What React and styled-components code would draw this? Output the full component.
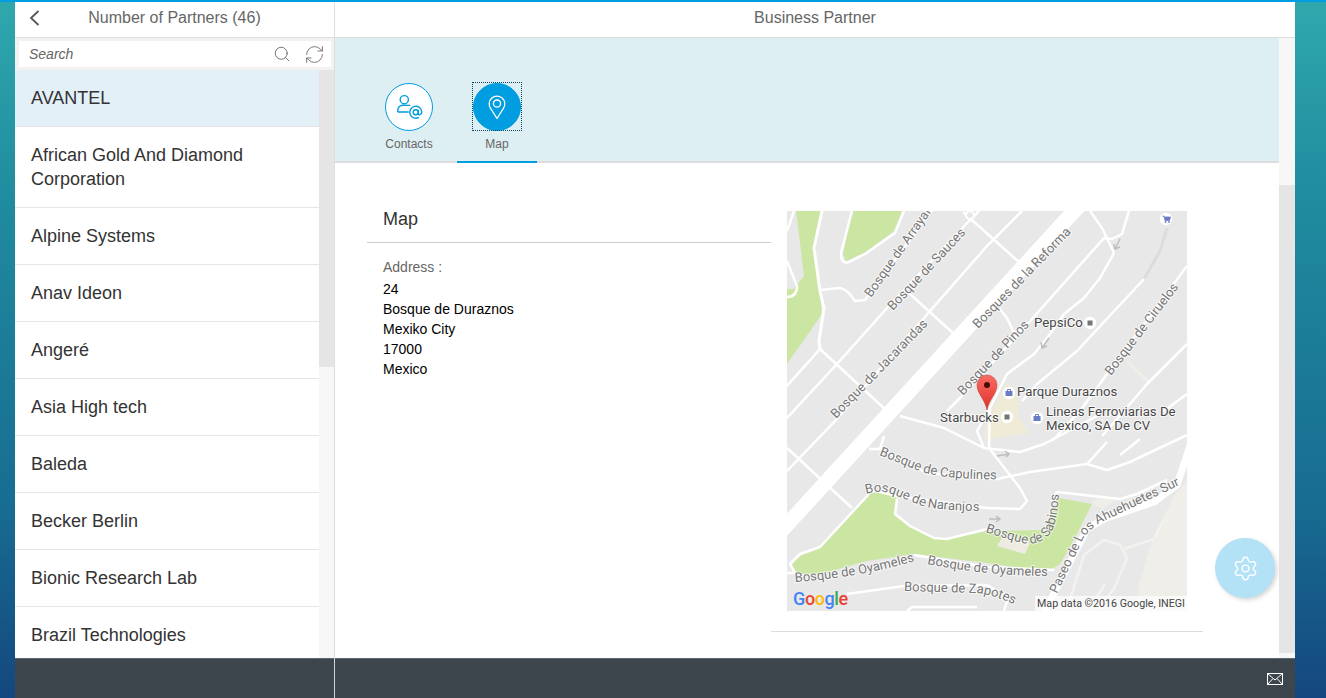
import React from "react";
import styled, { createGlobalStyle } from "styled-components";
import { Search, RefreshCw, Settings } from "lucide-react";

const GlobalStyle = createGlobalStyle`
    html, body, #root {
        margin: 0;
        height: 100%;
        overflow: hidden;
    }
    body {
        font-family: "Liberation Sans", Arial, sans-serif;
        background: linear-gradient(180deg, #2fa8ad 0%, #1f8a9e 30%, #186d92 72%, #14477f 100%);
    }
    * {
        box-sizing: border-box;
    }
`;

const Page = styled.div`
    height: 698px;
    display: flex;
    flex-direction: column;
    border-top: 2px solid #009de0;
    padding: 0 31px 0 15px;
`;

const Shell = styled.div`
    position: relative;
    flex: 1;
    min-height: 0;
    display: flex;
    flex-direction: column;
    background: #fff;
`;

const Columns = styled.div`
    flex: 1;
    min-height: 0;
    display: grid;
    grid-template-columns: 320px 1fr;
`;

const Master = styled.section`
    display: flex;
    flex-direction: column;
    min-height: 0;
    border-right: 1px solid #ddd;
`;

const Detail = styled.section`
    display: flex;
    flex-direction: column;
    min-height: 0;
`;

const Header = styled.header`
    position: relative;
    flex: none;
    height: 36px;
    padding-bottom: 3px;
    display: flex;
    align-items: center;
    justify-content: center;
    font-size: 16px;
    color: #666;
    border-bottom: 1px solid #ddd;
`;

const BackButton = styled.button`
    position: absolute;
    left: 14px;
    top: 7px;
    width: 12px;
    height: 18px;
    padding: 0;
    border: 0;
    background: none;
    color: #555;
    display: flex;
`;

const SearchRow = styled.div`
    flex: none;
    height: 32px;
    padding: 3px 3px 3px 4px;
    background: #f2f2f2;
`;

const SearchBox = styled.div`
    height: 26px;
    display: flex;
    align-items: center;
    gap: 13px;
    padding: 0 6px 0 10px;
    background: #fff;
    color: #666;

    input {
        flex: 1;
        min-width: 0;
        border: 0;
        outline: 0;
        padding: 0;
        font: italic 14px "Liberation Sans", Arial, sans-serif;
        color: #666;
    }

    input::placeholder {
        color: #666;
        opacity: 1;
    }
`;

const ListArea = styled.div`
    flex: 1;
    min-height: 0;
    display: flex;
    overflow: hidden;
`;

const PartnerList = styled.ul`
    flex: 1;
    min-width: 0;
    margin: 0;
    padding: 0;
    list-style: none;
`;

const PartnerItem = styled.li`
    padding: 16px;
    font-size: 18px;
    line-height: 24px;
    color: #333;
    background: ${p => (p.$selected ? "#e3f0f8" : "#fff")};
    border-bottom: 1px solid #e5e5e5;
`;

const ScrollTrack = styled.div`
    flex: none;
    width: ${p => p.$width}px;
    background: #f7f7f7;
    padding-top: ${p => p.$offset}px;
`;

const ScrollThumb = styled.div`
    height: ${p => p.$height}px;
    background: #e5e5e5;
`;

const DetailBody = styled.div`
    flex: 1;
    min-height: 0;
    display: flex;
`;

const DetailMain = styled.div`
    flex: 1;
    min-width: 0;
    display: flex;
    flex-direction: column;
`;

const TabBar = styled.nav`
    flex: none;
    height: 125px;
    padding: 45px 0 0 34px;
    display: flex;
    gap: 8px;
    background: #deeff3;
    border-bottom: 2px solid #ddd;
`;

const Tab = styled.div`
    position: relative;
    width: 80px;
    height: 80px;
    display: flex;
    flex-direction: column;
    align-items: center;
    font-size: 12px;
    color: #666;
    border-bottom: ${p => (p.$active ? "2px solid #009de0" : "0")};
`;

const TabCircle = styled.div`
    position: relative;
    width: 48px;
    height: 48px;
    border-radius: 50%;
    border: 1px solid #009de0;
    background: ${p => (p.$active ? "#009de0" : "#fff")};
    margin-bottom: 6px;
    line-height: 0;

    ${p => p.$active && `
        &::after {
            content: "";
            position: absolute;
            inset: -2px -2px -1px -2px;
            border: 1px dotted #00476b;
        }
    `}

    svg {
        position: absolute;
        left: -1px;
        top: -1px;
    }
`;

const TabLabel = styled.span`
    line-height: 14px;
`;

const Content = styled.div`
    flex: 1;
    min-height: 0;
    padding-left: 32px;
    display: grid;
    grid-template-columns: 404px 432px;
    align-content: start;
`;

const InfoColumn = styled.div`
    padding-top: 40px;
`;

const SectionTitle = styled.h2`
    margin: 0;
    height: 40px;
    padding-left: 16px;
    font-size: 18px;
    font-weight: 400;
    line-height: 32px;
    color: #333;
    border-bottom: 1px solid #ccc;
`;

const Address = styled.div`
    margin-top: 14px;
    padding-left: 16px;
    font-size: 14px;
    line-height: 20px;
    color: #000;
`;

const AddressLabel = styled.div`
    color: #666;
    margin-bottom: 2px;
`;

const MapColumn = styled.div`
    padding: 48px 16px 20px;
    border-bottom: 1px solid #ddd;
    line-height: 0;
`;

const SettingsFab = styled.button`
    position: absolute;
    right: 20px;
    top: 536px;
    width: 60px;
    height: 60px;
    padding: 0;
    border: 0;
    border-radius: 50%;
    display: flex;
    align-items: center;
    justify-content: center;
    background: #b3e1f6;
    color: #fff;
    box-shadow: 2px 2px 4px rgba(0, 0, 0, 0.16);
`;

const Footer = styled.footer`
    flex: none;
    height: 40px;
    display: flex;
    align-items: center;
    justify-content: flex-end;
    padding-right: 12px;
    background: #3d464c;
    border-top: 1px solid #5b6770;
    color: #fff;
`;

const FooterSplit = styled.div`
    position: absolute;
    left: 319px;
    bottom: 0;
    height: 40px;
    width: 1px;
    background: #d5d5d5;
`;

const MapLabel = styled.text`
    font-family: Roboto, sans-serif;
    font-size: ${p => p.$size || 13}px;
    fill: ${p => p.$dark ? "#484848" : "#767676"};
    stroke: rgba(255, 255, 255, 0.7);
    stroke-width: 2px;
    paint-order: stroke;
    stroke-linejoin: round;
`;

const partners = [
    "AVANTEL",
    "African Gold And Diamond Corporation",
    "Alpine Systems",
    "Anav Ideon",
    "Angeré",
    "Asia High tech",
    "Baleda",
    "Becker Berlin",
    "Bionic Research Lab",
    "Brazil Technologies",
];

const roads = [
    ["M35,0 L27,37 L33,80 L37,97 L32,130 L33,138", 3],
    ["M33,79 L53,77 Q60,78 68,90 L78,89 L148,-5", 2.5],
    ["M7,0 L0,20", 2.5],
    ["M0,50 L10,75 Q10,86 0,86", 2.5],
    ["M65,0 L54,42 Q54,54 62,51 L78,43 L108,22 L117,0", 2.5],
    ["M33,138 L0,175", 2.5],
    ["M200,-8 L182,10 L100,97 L50,153 L0,207", 2.5],
    ["M235,0 L200,35 L143,100 L48,210 L0,260", 2.5],
    ["M33,138 L100,200", 2.5],
    ["M122,82 L167,123", 2.5],
    ["M176,1 L233,52", 2.5],
    ["M300,-14 L-14,329", 15],
    ["M303,0 L315,17 L327,42", 2.5],
    ["M342,0 L335,23 L325,28 L317,27 L237,117 L173,187 L160,200", 2.5],
    ["M212,97 L220,107 L227,122 L237,117", 2.5],
    ["M327,42 L313,67 L297,87 L277,103 L263,123 L247,143 L220,163 L203,197 L202,237 L233,277 L240,290 L233,298 L200,297 L110,285 L80,278", 2.5],
    ["M113,205 L157,217 L197,237 L190,220 L203,197", 2.5],
    ["M197,237 L233,241 L257,233 L310,205", 2.5],
    ["M93,238 L140,262 L210,268 L243,261 L300,253 L320,259 L343,251 L400,224", 2.5],
    ["M82,238 L93,238 L97,225", 2.5],
    ["M300,253 L320,231", 2.5],
    ["M333,244 L353,228", 2.5],
    ["M357,68 L290,140 L250,173 L235,190", 2.5],
    ["M400,55 L320,163 L293,200 L265,230", 2.5],
    ["M400,133 L360,173 L337,200 L315,225", 2.5],
    ["M377,200 L400,183", 2.5],
    ["M265,288 L270,281 L333,288 L350,283 L380,269", 2.5],
    ["M0,237 L65,297", 2.5],
    ["M82,283 L33,336 L13,343 L3,353 L8,362 L0,362", 2.5],
    ["M110,288 L108,303 L123,315 L147,327 L160,328 L200,318", 2.5],
    ["M127,344 L200,356 L267,359", 2.5],
    ["M60,383 L117,375 L200,374 L215,383 L220,390 L217,400", 2.5],
    ["M120,400 L125,396 L190,396", 2.5],
    ["M406,225 L400,244 L390,274 L367,291 L317,308 L300,318 L283,351 L258,400", 7],
];

const labels = [
    ["Bosque de Arrayanes", "M84,87 L162,-24"],
    ["Bosque de Sauces", "M106,100 L200,0"],
    ["Bosque de Jacarandas", "M49,208 L170,84"],
    ["Bosques de la Reforma", "M191,118 L312,-7"],
    ["Bosque de Pinos", "M176,185 L259,97"],
    ["Bosque de Ciruelos", "M324,165 L415,46"],
    ["Bosque de Capulines", "M92,244 L135,261 Q165,270 230,268"],
    ["Bosque de Naranjos", "M79,283 Q95,278 110,285 L135,295 Q160,301 215,300"],
    ["Bosque de Oyameles", "M8,371 Q70,367 128,350 L150,343"],
    ["Bosque de Oyameles", "M140,353 Q200,365 263,365 L285,365"],
    ["Bosque de Sabinos", "M198,321 Q225,330 240,333 Q258,333 266,318 Q273,300 272,262"],
    ["Paseo de Los Ahuehuetes Sur", "M270,383 L296,328 Q304,316 317,310 L420,261"],
    ["Bosque de Zapotes", "M117,380 L190,382 Q215,385 245,403"],
];

const ContactsIcon = () => (
    <svg width="48" height="48" viewBox="0 0 48 48" fill="none" stroke="#009de0" strokeWidth="1.4">
        <circle cx="19.3" cy="16.7" r="4.1" />
        <path d="M12.7 29 Q12.6 22.8 17.2 22.2 L25.3 22.4 M12.7 29 H23.7" />
        <circle cx="30.7" cy="29.3" r="2.5" />
        <path d="M33.2 26.8 V30.4 Q33.4 32.4 35 31.7 Q36.8 30.8 36.8 29 A6 6 0 1 0 33.9 34.4" />
    </svg>
);

const PinIcon = () => (
    <svg width="48" height="48" viewBox="0 0 48 48" fill="none" stroke="#fff" strokeWidth="1.3">
        <path d="M24 35.5 L17.6 25.3 A7.8 7.8 0 1 1 30.4 25.3 Z" strokeLinejoin="round" />
        <circle cx="24" cy="20.6" r="3.6" />
    </svg>
);

const MailIcon = () => (
    <svg width="16" height="12" viewBox="0 0 16 12" fill="none" stroke="currentColor" strokeWidth="1">
        <rect x="0.5" y="0.5" width="15" height="11" />
        <path d="M0.5 0.5 L8 7 L15.5 0.5 M0.5 11.5 L6 5.5 M15.5 11.5 L10 5.5" />
    </svg>
);

const Poi = ({ x, y, color = "#757575", children }) => (
    <g>
        <circle cx={x} cy={y} r="6.2" fill="#fff" />
        {children || <rect x={x - 2.5} y={y - 2.5} width="5" height="5" fill={color} />}
    </g>
);

const MapPicture = () => (
    <svg width="400" height="400" viewBox="0 0 400 400">
        <defs>
            <linearGradient id="pinFill" x1="0" y1="0" x2="0" y2="1">
                <stop offset="0" stopColor="#f76d64" />
                <stop offset="1" stopColor="#e0302a" />
            </linearGradient>
            <clipPath id="mapClip"><rect width="400" height="400" /></clipPath>
            {labels.map(([, d], i) => <path key={i} id={`label-${i}`} d={d} />)}
        </defs>
        <g clipPath="url(#mapClip)">
            <rect width="400" height="400" fill="#e8e8e8" />
            <path d="M9,0 L17,65 L9,75 L0,85 V153 L35,103 L33,80 L28,33 L35,0 Z" fill="#cbe6a3" />
            <path d="M0,78 H7 L4,84 H0 Z" fill="#cbe6a3" />
            <path d="M65,0 L56,43 L59,50 L77,42 L107,20 L115,0 Z" fill="#cbe6a3" />
            <path d="M5,353 L13,345 L30,338 L82,283 L97,280 L110,288 L108,303 L123,315 L147,327 L160,328 L200,320 L257,319 L272,287 L305,293 L288,327 L273,353 L262,360 L233,357 L200,352 L127,343 L80,350 L33,363 L10,363 Z" fill="#cbe6a3" />
            <path d="M210,335 L217,323 L243,332 L238,343 Z" fill="#efebe2" />
            <path d="M347,400 L353,370 L365,330 L387,285 L400,270 V400 Z" fill="#efeee9" />
            <path d="M305,293 L312,284 L330,288 L316,298 Z" fill="#efeee9" />
            <path d="M205,200 L220,172 L232,188 L230,205 L242,222 L197,229 L200,212 Z" fill="#f0ebd7" />
            <path d="M340,150 L363,172" stroke="#efefe8" strokeWidth="2.5" />
            <path d="M380,17 L373,40 L357,68" stroke="#dcdcdc" strokeWidth="3" fill="none" />
            {roads.map(([d, w], i) => (
                <path key={i} d={d} fill="none" stroke="#fff" strokeWidth={w} strokeLinejoin="round" />
            ))}
            <g fill="none" stroke="#f3f2ee" strokeWidth="2.5">
                <path d="M280,398 L297,344 L317,329 L333,334 L340,347 L327,378 L310,398" />
                <path d="M337,338 L367,328 L377,308" />
                <path d="M318,373 L303,396" />
            </g>
            <circle cx="183" cy="4" r="4" fill="#e8e8e8" stroke="#fff" strokeWidth="2" />
            <g fill="none" stroke="#bdbdbd" strokeWidth="1.5">
                <path d="M333,28 L328,38 M327,33 L328,38 L333,36" />
                <path d="M262,127 L255,137 M254,131 L255,137 L260,135" />
                <path d="M210,245 L222,243 M218,240 L222,243 L219,246" />
                <path d="M202,308 L213,308 M209,305 L213,308 L209,311" />
            </g>
            {labels.map(([t], i) => (
                <MapLabel key={i}><textPath href={`#label-${i}`}>{t}</textPath></MapLabel>
            ))}
            <MapLabel $dark $size={13.2} x="247" y="116">PepsiCo</MapLabel>
            <MapLabel $dark $size={13.2} x="230" y="185">Parque Duraznos</MapLabel>
            <MapLabel $dark $size={13.2} x="153" y="211">Starbucks</MapLabel>
            <MapLabel $dark $size={13.2} x="259" y="205">Lineas Ferroviarias De</MapLabel>
            <MapLabel $dark $size={13.2} x="259" y="219">Mexico, SA De CV</MapLabel>
            <Poi x={303} y={112} />
            <Poi x={220} y={206} />
            <Poi x={222} y={182}>
                <rect x="218.5" y="180" width="7" height="5" fill="#6b7cc7" />
                <path d="M220.5 180 V178.5 H223.5 V180" fill="none" stroke="#6b7cc7" />
            </Poi>
            <Poi x={250} y={207}>
                <rect x="246.5" y="205" width="7" height="5" fill="#6b7cc7" />
                <path d="M248.5 205 V203.5 H251.5 V205" fill="none" stroke="#6b7cc7" />
            </Poi>
            <Poi x={379} y={8}>
                <path d="M375.5,5 H377 L378,9.5 H382.5 L383.5,6 H377.5" fill="#6b7cc7" stroke="#6b7cc7" strokeWidth="0.8" />
                <circle cx="378.5" cy="11" r="0.9" fill="#6b7cc7" />
                <circle cx="382" cy="11" r="0.9" fill="#6b7cc7" />
            </Poi>
            <path d="M200,199 C198,188 190,183 190,174 A10,10 0 1 1 210,174 C210,183 202,188 200,199 Z" fill="url(#pinFill)" stroke="#c5322c" strokeWidth="0.5" />
            <circle cx="200" cy="174" r="3" fill="#4a0a08" />
            <text x="6" y="394" fontFamily="Roboto, sans-serif" fontSize="18" fontWeight="500" letterSpacing="-0.4">
                <tspan fill="#4285f4">G</tspan>
                <tspan fill="#ea4335">o</tspan>
                <tspan fill="#fbbc05">o</tspan>
                <tspan fill="#4285f4">g</tspan>
                <tspan fill="#34a853">l</tspan>
                <tspan fill="#ea4335">e</tspan>
            </text>
            <rect x="248" y="385" width="152" height="15" fill="rgba(255,255,255,0.7)" />
            <text x="250" y="396" fontFamily="Roboto, sans-serif" fontSize="10.7" fill="#444">Map data ©2016 Google, INEGI</text>
        </g>
    </svg>
);

export default function App() {
    return (
        <>
            <GlobalStyle />
            <Page>
                <Shell>
                    <Columns>
                        <Master>
                            <Header>
                                <BackButton aria-label="Back">
                                    <svg width="12" height="18" viewBox="0 0 12 18" fill="none" stroke="currentColor" strokeWidth="1.8">
                                        <path d="M9.5 2 L2 9 L9.5 16" />
                                    </svg>
                                </BackButton>
                                Number of Partners (46)
                            </Header>
                            <SearchRow>
                                <SearchBox>
                                    <input placeholder="Search" />
                                    <Search size={18} strokeWidth={1.2} />
                                    <RefreshCw size={21} strokeWidth={1} />
                                </SearchBox>
                            </SearchRow>
                            <ListArea>
                                <PartnerList>
                                    {partners.map((name, i) => (
                                        <PartnerItem key={name} $selected={i === 0}>{name}</PartnerItem>
                                    ))}
                                </PartnerList>
                                <ScrollTrack $width={15} $offset={0}>
                                    <ScrollThumb $height={297} />
                                </ScrollTrack>
                            </ListArea>
                        </Master>
                        <Detail>
                            <Header>Business Partner</Header>
                            <DetailBody>
                                <DetailMain>
                                    <TabBar>
                                        <Tab>
                                            <TabCircle><ContactsIcon /></TabCircle>
                                            <TabLabel>Contacts</TabLabel>
                                        </Tab>
                                        <Tab $active>
                                            <TabCircle $active><PinIcon /></TabCircle>
                                            <TabLabel>Map</TabLabel>
                                        </Tab>
                                    </TabBar>
                                    <Content>
                                        <InfoColumn>
                                            <SectionTitle>Map</SectionTitle>
                                            <Address>
                                                <AddressLabel>Address :</AddressLabel>
                                                <div>24</div>
                                                <div>Bosque de Duraznos</div>
                                                <div>Mexiko City</div>
                                                <div>17000</div>
                                                <div>Mexico</div>
                                            </Address>
                                        </InfoColumn>
                                        <MapColumn>
                                            <MapPicture />
                                        </MapColumn>
                                    </Content>
                                </DetailMain>
                                <ScrollTrack $width={16} $offset={147}>
                                    <ScrollThumb $height={468} />
                                </ScrollTrack>
                            </DetailBody>
                        </Detail>
                    </Columns>
                    <SettingsFab aria-label="Settings">
                        <Settings size={27} strokeWidth={1.2} />
                    </SettingsFab>
                    <Footer>
                        <FooterSplit />
                        <MailIcon />
                    </Footer>
                </Shell>
            </Page>
        </>
    );
}
